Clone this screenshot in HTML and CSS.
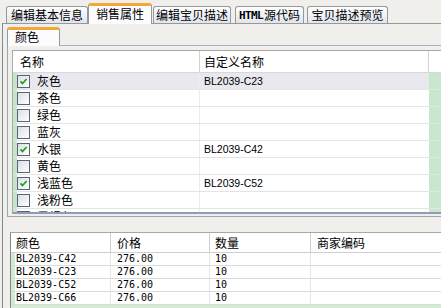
FILE: index.html
```html
<!DOCTYPE html>
<html>
<head>
<meta charset="utf-8">
<link rel="stylesheet" href="styles.css">
</head>
<body>
<div class="tabbar">
  <div class="tab t1">编辑基本信息</div>
  <div class="tab sel">销售属性</div>
  <div class="tab t3">编辑宝贝描述</div>
  <div class="tab t4"><span class="lat">HTML</span>源代码</div>
  <div class="tab t5">宝贝描述预览</div>
</div>
<div class="page">
  <div class="subtab">颜色</div>
  <div class="subpage">
    <div class="grid1">
      <div class="g1head">
        <div class="c1 hc">名称</div>
        <div class="c2 hc">自定义名称</div>
        <div class="c3 hc"></div>
      </div>
      <div class="g1row selrow"><div class="rh"></div><div class="c1b"><span class="cb on"><svg viewBox="0 0 11 11" width="11" height="11"><path d="M2.5 5.3 L4.5 7.5 L8.6 3" fill="none" stroke="#21a121" stroke-width="1.8"/></svg></span><span class="nm">灰色</span></div><div class="c2b">BL2039-C23</div><div class="c3b"></div></div>
      <div class="g1row"><div class="rh"></div><div class="c1b"><span class="cb"></span><span class="nm">茶色</span></div><div class="c2b"></div><div class="c3b"></div></div>
      <div class="g1row"><div class="rh"></div><div class="c1b"><span class="cb"></span><span class="nm">绿色</span></div><div class="c2b"></div><div class="c3b"></div></div>
      <div class="g1row"><div class="rh"></div><div class="c1b"><span class="cb"></span><span class="nm">蓝灰</span></div><div class="c2b"></div><div class="c3b"></div></div>
      <div class="g1row"><div class="rh"></div><div class="c1b"><span class="cb on"><svg viewBox="0 0 11 11" width="11" height="11"><path d="M2.5 5.3 L4.5 7.5 L8.6 3" fill="none" stroke="#21a121" stroke-width="1.8"/></svg></span><span class="nm">水银</span></div><div class="c2b">BL2039-C42</div><div class="c3b"></div></div>
      <div class="g1row"><div class="rh"></div><div class="c1b"><span class="cb"></span><span class="nm">黄色</span></div><div class="c2b"></div><div class="c3b"></div></div>
      <div class="g1row"><div class="rh"></div><div class="c1b"><span class="cb on"><svg viewBox="0 0 11 11" width="11" height="11"><path d="M2.5 5.3 L4.5 7.5 L8.6 3" fill="none" stroke="#21a121" stroke-width="1.8"/></svg></span><span class="nm">浅蓝色</span></div><div class="c2b">BL2039-C52</div><div class="c3b"></div></div>
      <div class="g1row"><div class="rh"></div><div class="c1b"><span class="cb"></span><span class="nm">浅粉色</span></div><div class="c2b"></div><div class="c3b"></div></div>
      <div class="g1row"><div class="rh"></div><div class="c1b"><span class="cb"></span><span class="nm">墨绿色</span></div><div class="c2b"></div><div class="c3b"></div></div>
    </div>
  </div>
  <div class="grid2">
    <div class="g2head">
      <div class="d1 h2">颜色</div>
      <div class="d2 h2">价格</div>
      <div class="d3 h2">数量</div>
      <div class="d4 h2">商家编码</div>
    </div>
    <div class="g2row"><div class="d1 v2"><span class="rh2"></span>BL2039-C42</div><div class="d2 v2">276.00</div><div class="d3 v2">10</div><div class="d4 v2"></div></div>
    <div class="g2row"><div class="d1 v2"><span class="rh2"></span>BL2039-C23</div><div class="d2 v2">276.00</div><div class="d3 v2">10</div><div class="d4 v2"></div></div>
    <div class="g2row"><div class="d1 v2"><span class="rh2"></span>BL2039-C52</div><div class="d2 v2">276.00</div><div class="d3 v2">10</div><div class="d4 v2"></div></div>
    <div class="g2row"><div class="d1 v2"><span class="rh2"></span>BL2039-C66</div><div class="d2 v2">276.00</div><div class="d3 v2">10</div><div class="d4 v2"></div></div>
    <div class="g2fill"></div>
  </div>
</div>
</body>
</html>
```
FILE: styles.css
```css
* { box-sizing: border-box; }
html, body { margin: 0; padding: 0; }
body {
  width: 441px;
  height: 308px;
  overflow: hidden;
  background: #f0efec;
  font-family: "Noto Sans CJK SC", sans-serif;
  font-size: 12px;
  color: #000;
}
.tabbar {
  height: 23px;
  display: flex;
  align-items: flex-end;
  padding-left: 6px;
  position: relative;
  z-index: 2;
}
.tab {
  height: 17px;
  border: 1px solid #919b9c;
  border-bottom: none;
  border-radius: 3px 3px 0 0;
  background: linear-gradient(#fefefe, #e2e5ee);
  display: flex;
  align-items: center;
  justify-content: center;
  line-height: 1;
  white-space: nowrap;
}
.t1 { width: 82px; }
.sel {
  width: 64px;
  height: 21px;
  margin-bottom: -1px;
  background: #fcfcfe;
  border-top: 3px solid #f3a737;
  padding-bottom: 2px;
}
.t3 { width: 78px; margin-left: 1px; }
.t4 { width: 69px; margin-left: 4px; }
.t5 { width: 81px; margin-left: 3px; }
.lat { font-family: "DejaVu Sans Mono", monospace; font-size: 11px; font-weight: bold; letter-spacing: -0.6px; margin-right: 1px; }
.page {
  height: 285px;
  margin-left: 2px;
  border-top: 1px solid #919b9c;
  border-left: 1px solid #7f8a8c;
  padding: 3px 0 0 4px;
  display: flex;
  flex-direction: column;
}
.subtab {
  width: 53px;
  height: 19px;
  margin-bottom: -1px;
  position: relative;
  z-index: 1;
  border: 1px solid #919b9c;
  border-bottom: none;
  border-top: 3px solid #f3a737;
  border-radius: 3px 3px 0 0;
  background: #fcfcfe;
  padding-left: 7px;
  line-height: 14px;
}
.subpage {
  height: 172px;
  border-top: 1px solid #a9afc4;
  border-left: 1px solid #a0a4a8;
  border-bottom: 1px solid #a0a4a8;
  padding: 4px 0 2px 4px;
}
.grid1 {
  height: 164px;
  overflow: hidden;
  background: #fff;
  border-top: 1px solid #a8a8a8;
  border-left: 1px solid #a8a8a8;
  border-bottom: 2px solid #8e9cb4;
  display: flex;
  flex-direction: column;
}
.g1head {
  flex: none;
  height: 22px;
  display: flex;
  border-bottom: 1px solid #d8d8d8;
}
.hc { height: 21px; line-height: 21px; white-space: nowrap; }
.c1 { width: 187px; padding-left: 7px; border-right: 1px solid #d4d4d4; }
.c2 { width: 229px; padding-left: 4px; border-right: 1px solid #d4d4d4; }
.c3 { flex: 1; }
.g1row {
  flex: none;
  height: 17px;
  display: flex;
  border-bottom: 1px solid #e4e4e4;
}
.rh { width: 4px; background: #c6e4c8; }
.c1b {
  width: 183px;
  display: flex;
  align-items: center;
  padding-left: 0;
  border-right: 1px solid #ececec;
}
.cb {
  width: 13px;
  height: 13px;
  border: 1px solid #55657e;
  background: linear-gradient(135deg, #dedfe2, #ffffff);
  display: flex;
  align-items: center;
  justify-content: center;
}
.nm { margin-left: 7px; line-height: 16px; }
.c2b {
  width: 229px;
  padding-left: 4px;
  font-family: "Liberation Sans", Arial, sans-serif;
  font-size: 10.5px;
  line-height: 16px;
}
.c3b { flex: 1; background: #c9e7cd; }
.selrow .c1b, .selrow .c2b { background: #e9e8ee; }
.grid2 {
  flex: 1;
  margin: 15px 0 0 3px;
  background: #fff;
  border-top: 1px solid #a8a8a8;
  border-left: 1px solid #7f8a8c;
  display: flex;
  flex-direction: column;
}
.g2head {
  flex: none;
  height: 20px;
  display: flex;
  border-bottom: 1px solid #cfcfcf;
}
.h2 { line-height: 19px; white-space: nowrap; }
.d1 { width: 100px; padding-left: 5px; border-right: 1px solid #d0d0d0; }
.d2 { width: 99px; padding-left: 6px; border-right: 1px solid #d0d0d0; }
.d3 { width: 101px; padding-left: 5px; border-right: 1px solid #d0d0d0; }
.d4 { flex: 1; padding-left: 6px; }
.g2row {
  flex: none;
  height: 13px;
  display: flex;
  border-bottom: 1px solid #dadada;
}
.v2 {
  font-family: "DejaVu Sans Mono", monospace;
  font-size: 10px;
  line-height: 12px;
  border-right-color: #e6e6e6;
  white-space: nowrap;
}
.g2row .d1 { padding-left: 0; display: flex; }
.rh2 { width: 4px; margin-right: 1px; background: #d2ead4; }
.g2fill { flex: 1; background: #d4ebd6; }
```
